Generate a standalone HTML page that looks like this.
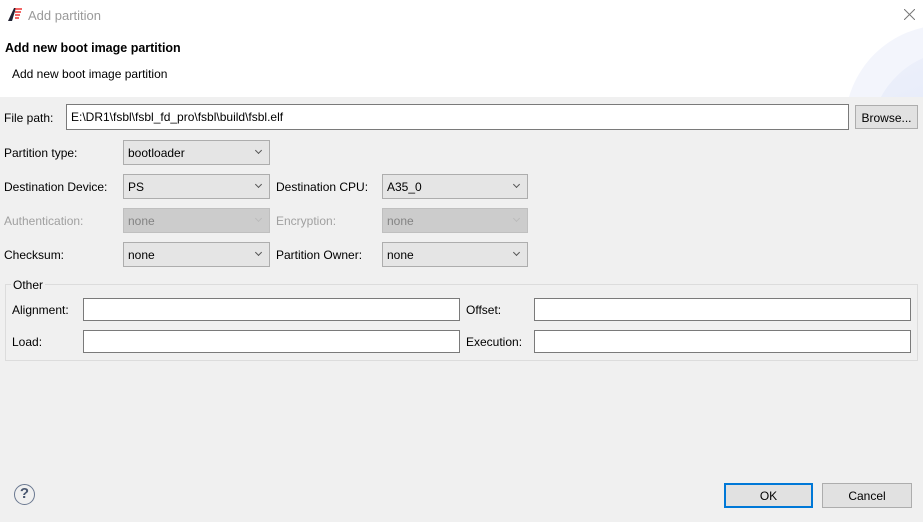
<!DOCTYPE html><html><head><style>
*{box-sizing:border-box;margin:0;padding:0}
body{width:923px;height:522px;background:#f0f0f0;font-family:"Liberation Sans",sans-serif;font-size:12px;color:#000;position:relative;overflow:hidden}
.a{position:absolute}
.cb{position:absolute;height:25px;background:#e5e5e5;border:1px solid #adadad;padding:5px 0 0 4px;font-size:12px}
.cb:after{content:"";position:absolute;right:8px;top:7px;width:4px;height:4px;border-right:1px solid #555;border-bottom:1px solid #555;transform:rotate(45deg)}
.dis{background:#cccccc;border-color:#bfbfbf;color:#838383}
.dis:after{border-color:#bbb}
.in{position:absolute;background:#fff;border:1px solid #7a7a7a;height:23px}
.l{position:absolute;font-size:12px}
.btn{position:absolute;background:#e1e1e1;border:1px solid #adadad;text-align:center;font-size:12px}
</style></head><body>
<div class="a" style="left:0;top:0;width:923px;height:97px;background:#fff;overflow:hidden">
<div class="a" style="left:845px;top:25px;width:200px;height:200px;border-radius:50%;background:#f3f5fc"></div>
<div class="a" style="left:870px;top:50px;width:180px;height:180px;border-radius:50%;background:linear-gradient(160deg,#eef1fb,#d9e1f6)"></div>
</div>
<svg class="a" style="left:7px;top:6px" width="16" height="16" viewBox="0 0 16 16"><path d="M1 15L7 2h2L5 15z" fill="#223"/><path d="M8 3h7M8 6h6M8 9h5M8 12h4" stroke="#e33" stroke-width="1.6"/></svg>
<div class="l" style="left:28px;top:8px;font-size:13px;color:#9a9a9a">Add partition</div>
<svg class="a" style="left:904px;top:9px" width="11" height="11" viewBox="0 0 11 11"><path d="M0 0L11 11M11 0L0 11" stroke="#777" stroke-width="1"/></svg>
<div class="l" style="left:5px;top:41px;font-weight:bold;font-size:12.5px">Add new boot image partition</div>
<div class="l" style="left:12px;top:67px">Add new boot image partition</div>
<div class="l" style="left:4px;top:111px">File path:</div>
<div class="in" style="left:66px;top:104px;width:783px;height:26px;padding:5px 4px">E:\DR1\fsbl\fsbl_fd_pro\fsbl\build\fsbl.elf</div>
<div class="btn" style="left:855px;top:105px;width:63px;height:24px;padding-top:5px">Browse...</div>
<div class="l" style="left:4px;top:146px">Partition type:</div>
<div class="cb" style="left:123px;top:140px;width:147px">bootloader</div>
<div class="l" style="left:4px;top:180px">Destination Device:</div>
<div class="cb" style="left:123px;top:174px;width:147px">PS</div>
<div class="l" style="left:276px;top:180px">Destination CPU:</div>
<div class="cb" style="left:382px;top:174px;width:146px">A35_0</div>
<div class="l" style="left:4px;top:214px;color:#a0a0a0">Authentication:</div>
<div class="cb dis" style="left:123px;top:208px;width:147px">none</div>
<div class="l" style="left:276px;top:214px;color:#a0a0a0">Encryption:</div>
<div class="cb dis" style="left:382px;top:208px;width:146px">none</div>
<div class="l" style="left:4px;top:248px">Checksum:</div>
<div class="cb" style="left:123px;top:242px;width:147px">none</div>
<div class="l" style="left:276px;top:248px">Partition Owner:</div>
<div class="cb" style="left:382px;top:242px;width:146px">none</div>
<div class="a" style="left:5px;top:284px;width:913px;height:77px;border:1px solid #dcdcdc"></div>
<div class="l" style="left:11px;top:278px;background:#f0f0f0;padding:0 2px">Other</div>
<div class="l" style="left:12px;top:303px">Alignment:</div>
<div class="in" style="left:83px;top:298px;width:377px"></div>
<div class="l" style="left:466px;top:303px">Offset:</div>
<div class="in" style="left:534px;top:298px;width:377px"></div>
<div class="l" style="left:12px;top:335px">Load:</div>
<div class="in" style="left:83px;top:330px;width:377px"></div>
<div class="l" style="left:466px;top:335px">Execution:</div>
<div class="in" style="left:534px;top:330px;width:377px"></div>
<div class="a" style="left:14px;top:484px;width:21px;height:21px;border:1.5px solid #6a7890;border-radius:50%;text-align:center;font-size:15px;font-weight:bold;color:#4a5870;line-height:18px">?</div>
<div class="btn" style="left:724px;top:483px;width:89px;height:25px;border:2px solid #0078d7;padding-top:4px">OK</div>
<div class="btn" style="left:822px;top:483px;width:90px;height:25px;padding-top:5px">Cancel</div>
</body></html>
